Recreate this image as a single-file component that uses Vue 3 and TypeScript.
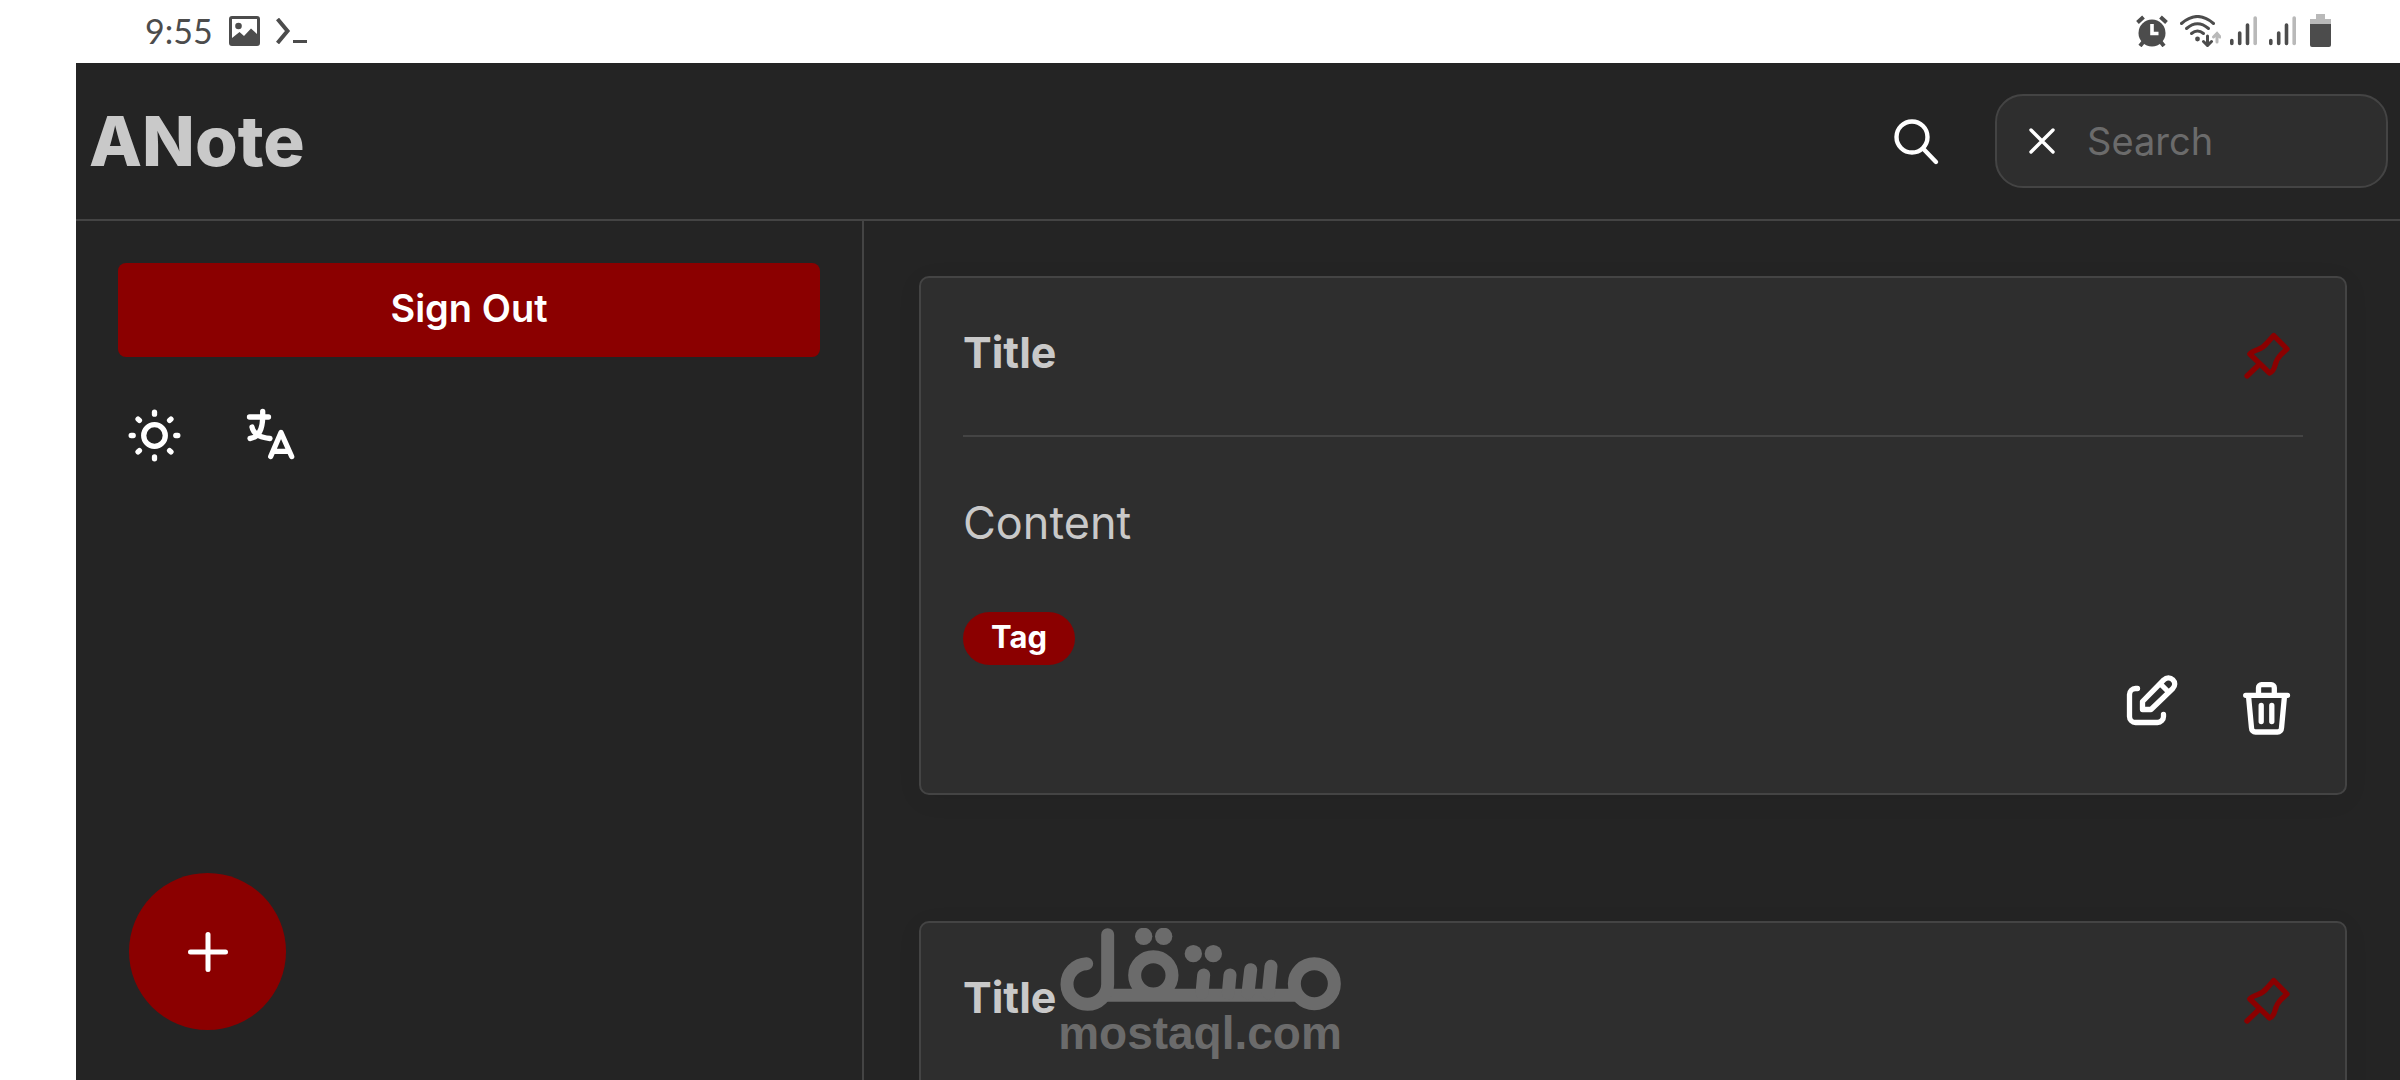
<script setup lang="ts">
import { ref } from 'vue'

interface Note {
  id: number
  title: string
  content?: string
  tag?: string
}

const query = ref<string>('')
const notes = ref<Note[]>([
  { id: 1, title: 'Title', content: 'Content', tag: 'Tag' },
  { id: 2, title: 'Title' },
])

const rays: number[] = [0, 45, 90, 135, 180, 225, 270, 315]
const signals: number[] = [1, 2]
</script>

<template>
  <div class="screen">
    <div class="status">
      <div class="status-side">
        <span class="clock">9:55</span>
        <svg class="picture" viewBox="0 0 31 30" aria-hidden="true">
          <path fill-rule="evenodd" d="M3 0H28a3 3 0 0 1 3 3V27a3 3 0 0 1-3 3H3a3 3 0 0 1-3-3V3a3 3 0 0 1 3-3ZM3 3V22L10.500 16L15 20L22 12.500L28 18V3Z" />
          <circle cx="9.500" cy="10" r="3.300" />
        </svg>
        <svg class="prompt" viewBox="0 0 31 26" aria-hidden="true">
          <path d="M1.500 1L11.500 13L1.500 25" fill="none" stroke="#4c4c4c" stroke-width="4" />
          <rect x="17" y="22" width="14" height="3" />
        </svg>
      </div>
      <div class="status-side">
        <svg class="alarm" viewBox="0 0 32 32" aria-hidden="true">
          <circle cx="16" cy="18" r="13.500" />
          <g stroke="#4c4c4c" stroke-width="4" fill="none">
            <path d="M1.500 7.500L7.500 2M30.500 7.500L24.500 2M4 31L8 26M28 31L24 26" />
          </g>
          <path d="M16 9V18.500H22.500" fill="none" stroke="#fff" stroke-width="3.600" />
        </svg>
        <svg class="wifi" viewBox="0 0 41 32" aria-hidden="true">
          <g fill="none" stroke="#4c4c4c" stroke-width="3" stroke-linecap="round">
            <path d="M1.500 8.500Q17.500-5.500 33.500 8.500" />
            <path d="M6.500 13.500Q17.500 4 28.500 13.500" />
            <path d="M11.500 18.500Q17.500 13.500 23.500 18.500" />
            <path d="M27.500 21V30M23.500 26.500L27.500 30.500L31.500 26.500" />
            <path d="M37 27V19M33.500 22L37 18.500L40 22" stroke="#b9b9b9" />
          </g>
          <circle cx="17.500" cy="24" r="2.400" />
        </svg>
        <svg v-for="s in signals" :key="s" class="signal" viewBox="0 0 27 30" aria-hidden="true">
          <g fill="none" stroke="#4c4c4c" stroke-width="3.600" stroke-linecap="round">
            <path d="M1.800 24.500V27.500M9.700 17V27.500M17.500 9V27.500" />
            <path d="M25.200 2V27.500" stroke="#b9b9b9" />
          </g>
        </svg>
        <svg class="battery" viewBox="0 0 21 33" aria-hidden="true">
          <path d="M6 0H15V5H21V11H0V5H6Z" fill="#b9b9b9" />
          <path d="M0 10H21V31a2 2 0 0 1-2 2H2a2 2 0 0 1-2-2Z" />
        </svg>
      </div>
    </div>

    <div class="app">
      <header class="topbar">
        <h1 class="brand">ANote</h1>
        <div class="tools">
          <button class="icon-btn" type="button" aria-label="Search notes">
            <svg viewBox="0 0 73 73" class="thin">
              <circle cx="32" cy="32" r="15.500" />
              <path d="M43.500 44L56 57" />
            </svg>
          </button>
          <div class="search">
            <button class="clear" type="button" aria-label="Clear search" @click="query = ''">
              <svg viewBox="0 0 26 26"><path d="M2 2L24 24M24 2L2 24" /></svg>
            </button>
            <input v-model="query" type="text" placeholder="Search" aria-label="Search" />
          </div>
        </div>
      </header>

      <div class="body">
        <aside class="sidebar">
          <button class="signout" type="button">Sign Out</button>
          <div class="prefs">
            <button class="icon-btn" type="button" aria-label="Toggle theme">
              <svg viewBox="0 0 73 73">
                <circle cx="36.500" cy="36.500" r="10.800" />
                <path v-for="a in rays" :key="a" d="M36.500 13.200V15.200" :transform="`rotate(${a} 36.500 36.500)`" />
              </svg>
            </button>
            <button class="icon-btn" type="button" aria-label="Change language">
              <svg viewBox="0 0 73 73">
                <path d="M16.500 18H35.500M29.700 12.500V19Q29 38 17 39.500M19 28Q21 38 37 39.500" />
                <path d="M37.700 57.500L48 33.500L58.700 57.500M41 52.300H55.500" />
              </svg>
            </button>
          </div>
          <button class="fab" type="button" aria-label="Add note">
            <svg viewBox="0 0 40 40"><path d="M20 2.500V37.500M2.500 20H37.500" /></svg>
          </button>
        </aside>

        <main class="notes">
          <article v-for="note in notes" :key="note.id" class="card">
            <div class="card-head">
              <h2>{{ note.title }}</h2>
              <button class="icon-btn pin" type="button" aria-label="Pin note">
                <svg viewBox="0 0 73 73">
                  <path d="M43.700 15.500L57 29L51 34.500Q46.500 39 45 45.500Q43.500 51.500 39.500 53L19.800 34Q22 31.500 28 29.500Q33.500 27.500 37.500 22.500Z" />
                  <path d="M28 45.500L17 56" />
                </svg>
              </button>
            </div>
            <p v-if="note.content">{{ note.content }}</p>
            <span v-if="note.tag" class="tag">{{ note.tag }}</span>
            <div class="actions">
              <button class="icon-btn" type="button" aria-label="Edit note">
                <svg viewBox="0 0 73 73">
                  <path d="M22.500 16.500H20.500a6 6 0 0 0-6 6V44.500a6 6 0 0 0 6 6H42.500a6 6 0 0 0 6-6V42.500" />
                  <path d="M27.500 37.500V29.500L49 7.700a6 6 0 0 1 8.800 0a6 6 0 0 1 0 8.800L36 37.500ZM45.500 12L53.500 20" />
                </svg>
              </button>
              <button class="icon-btn" type="button" aria-label="Delete note">
                <svg viewBox="0 0 73 73">
                  <path d="M15.700 23.300H57.500M28.500 23V15.700a3 3 0 0 1 3-3H41.300a3 3 0 0 1 3 3V23" />
                  <path d="M18.500 24L21.500 56a4 4 0 0 0 4 4H47.500a4 4 0 0 0 4-4L54.500 24M31.200 33.500V49.500M41.800 33.500V49.500" />
                </svg>
              </button>
            </div>
          </article>
        </main>
      </div>
    </div>

    <div class="watermark">
      <svg class="mark" viewBox="477 85 843 249" role="img" aria-label="مستقل">
        <g fill="none" stroke="#6b6b6b" stroke-width="39">
          <circle cx="1240" cy="252" r="60" />
          <circle cx="757" cy="227" r="56" />
          <path d="M600 287H1200" />
          <path d="M557 192A61 61 0 1 0 620 254V105" stroke-linecap="round" />
          <path d="M908 226L903 280M987 226L982 280M1049 210L1041 280M1110 200L1102 280" stroke-linecap="round" />
        </g>
        <g fill="#6b6b6b">
          <circle cx="728" cy="110" r="26" />
          <circle cx="788" cy="110" r="26" />
          <circle cx="877" cy="162" r="26" />
          <circle cx="937" cy="162" r="26" />
        </g>
      </svg>
      <span>mostaql.com</span>
    </div>
  </div>
</template>

<style>
body {
  margin: 0;
  background: #fff;
}
</style>

<style scoped>
.screen {
  position: relative;
  display: flex;
  flex-direction: column;
  height: 100vh;
  overflow: hidden;
  font-family: Inter, 'Open Sans', sans-serif;
  color: #c9c9c9;
}
.status {
  flex: none;
  display: flex;
  justify-content: space-between;
  height: 63px;
  padding: 0 69px 2px 145px;
  box-sizing: border-box;
}
.status-side {
  display: flex;
  align-items: center;
  gap: 12px;
}
.status svg {
  display: block;
  fill: #4c4c4c;
}
.clock {
  margin-right: 4px;
  font: 34px/40px Lato, sans-serif;
  color: #4c4c4c;
}
.picture { width: 31px; height: 30px; margin-right: 4px; }
.prompt { width: 31px; height: 26px; }
.alarm { width: 32px; height: 32px; }
.wifi { width: 41px; height: 32px; margin-right: -3px; }
.signal { width: 27px; height: 30px; }
.battery { width: 21px; height: 33px; margin-left: 2px; }

.app {
  flex: 1;
  min-height: 0;
  margin-left: 76px;
  display: flex;
  flex-direction: column;
  background: #242424;
}
.topbar {
  flex: none;
  display: flex;
  align-items: center;
  justify-content: space-between;
  padding: 31px 12px 31px 13px;
  border-bottom: 2px solid #444;
}
h1,
h2,
p {
  margin: 0;
}
.brand {
  font-size: 69px;
  line-height: 94px;
  font-weight: 800;
}
.tools {
  display: flex;
  align-items: center;
  gap: 42px;
}
button {
  padding: 0;
  border: 0;
  background: none;
  color: #fff;
  font-family: inherit;
  cursor: pointer;
}
button svg {
  display: block;
  width: 100%;
  height: 100%;
  fill: none;
  stroke: currentColor;
  stroke-width: 5.3;
  stroke-linecap: round;
  stroke-linejoin: round;
}
.icon-btn {
  flex: none;
  width: 73px;
  height: 73px;
}
.icon-btn .thin {
  stroke-width: 4.4;
}
.search {
  display: flex;
  align-items: center;
  gap: 32px;
  width: 393px;
  height: 94px;
  padding: 0 32px;
  box-sizing: border-box;
  border: 2px solid #444;
  border-radius: 28px;
  background: #2e2e2e;
}
.clear {
  flex: none;
  width: 26px;
  height: 26px;
}
.clear svg {
  stroke-width: 3.4;
}
.search input {
  flex: 1;
  min-width: 0;
  padding: 0;
  border: 0;
  outline: 0;
  background: none;
  color: #c9c9c9;
  font: 38px/56px Inter, 'Open Sans', sans-serif;
}
.search input::placeholder {
  color: #6b6b6b;
  opacity: 1;
}

.body {
  flex: 1;
  min-height: 0;
  display: flex;
}
.sidebar {
  flex: 0 0 788px;
  max-width: 40%;
  display: flex;
  flex-direction: column;
  gap: 42px;
  padding: 42px 42px 50px;
  box-sizing: border-box;
  border-right: 2px solid #444;
}
.signout {
  height: 94px;
  padding-bottom: 4px;
  border-radius: 8px;
  background: #8b0000;
  font-size: 38px;
  font-weight: 600;
}
.prefs {
  display: flex;
  gap: 42px;
}
.fab {
  display: flex;
  align-items: center;
  justify-content: center;
  width: 157px;
  height: 157px;
  margin: auto 0 0 11px;
  border-radius: 50%;
  background: #8b0000;
}
.fab svg {
  width: 40px;
  height: 40px;
  stroke-width: 5;
}

.notes {
  flex: 1;
  min-width: 0;
  display: flex;
  flex-direction: column;
  gap: 126px;
  padding: 55px 53px 55px 55px;
  overflow-y: auto;
  scrollbar-width: none;
}
.card {
  flex: none;
  display: flex;
  flex-direction: column;
  padding: 42px;
  border: 2px solid #444;
  border-radius: 10px;
  background: #2e2e2e;
  box-shadow: 0 5px 26px rgba(0, 0, 0, 0.06);
}
.card-head {
  display: flex;
  justify-content: space-between;
  padding-bottom: 42px;
  border-bottom: 2px solid #444;
}
.card h2 {
  font-size: 43px;
  line-height: 64px;
}
.card p {
  margin: 54px 0 57px;
  font-size: 45px;
  line-height: 64px;
}
.pin {
  color: #8b0000;
}
.tag {
  align-self: flex-start;
  padding: 0 28px 4px;
  border-radius: 27px;
  background: #8b0000;
  color: #fff;
  font-size: 31px;
  line-height: 49px;
  font-weight: 700;
}
.actions {
  display: flex;
  justify-content: flex-end;
  gap: 42px;
  padding: 7px 0 6px;
}

.watermark {
  position: absolute;
  right: 0;
  bottom: 25px;
  left: 0;
  display: flex;
  flex-direction: column;
  align-items: center;
  color: #6b6b6b;
  font: bold 46px/44px 'Liberation Sans', Arial, sans-serif;
  pointer-events: none;
}
.mark {
  display: block;
  width: 281px;
  height: 83px;
}
</style>
